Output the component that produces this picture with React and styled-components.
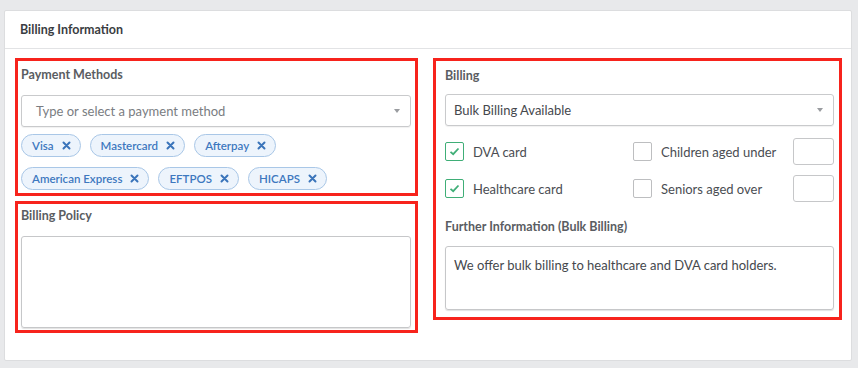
import React from "react";
import styled, { createGlobalStyle } from "styled-components";

const Global = createGlobalStyle`
  html, body { margin: 0; padding: 0; background: #e8e9eb; }
  body { font-family: Lato, "Open Sans", sans-serif; }
  * { box-sizing: border-box; }
`;

const Page = styled.div`
  padding: 10px 6px 7px 4px;
  height: 368px;
`;

const Card = styled.div`
  background: #fff;
  border: 1px solid #dcdddf;
  border-radius: 2px;
  height: 351px;
  display: flex;
  flex-direction: column;
`;

const CardHeader = styled.div`
  height: 38px;
  display: flex;
  align-items: center;
  padding-left: 15px;
  border-bottom: 1px solid #e2e3e5;
  font-size: 12.5px;
  font-weight: 700;
  color: #3a3d42;
`;

const CardBody = styled.div`
  display: grid;
  grid-template-columns: 403px 409px;
  column-gap: 15px;
  padding: 9px 0 0 10px;
  align-items: start;
`;

const Column = styled.div`
  display: flex;
  flex-direction: column;
  gap: 5px;
`;

const RedBox = styled.div`
  border: 3px solid #f7231c;
  padding: ${(p) => p.$pad || "4px 4px 4px 3px"};
  display: flex;
  flex-direction: column;
`;

const Label = styled.div`
  font-size: 12.5px;
  font-weight: 700;
  color: #5a5d62;
  height: 17px;
  line-height: 17px;
  margin: ${(p) => p.$mt || 2}px 0 ${(p) => p.$mb || 11}px;
`;

const Select = styled.div`
  height: 32px;
  border: 1px solid #c9cacc;
  border-radius: 3px;
  box-shadow: 0 1px 1px rgba(0,0,0,0.06);
  display: flex;
  align-items: center;
  justify-content: space-between;
  padding: 0 10px 0 ${(p) => p.$pl || 14}px;
  font-size: 13px;
  color: ${(p) => (p.$placeholder ? "#7a7d82" : "#45484d")};
`;

const Arrow = styled.span`
  width: 0;
  height: 0;
  border-left: 3px solid transparent;
  border-right: 3px solid transparent;
  border-top: 4px solid #9a9ca0;
`;

const Tags = styled.div`
  display: flex;
  flex-wrap: wrap;
  gap: 10px 9px;
  margin-top: 7px;
  width: 320px;
`;

const Tag = styled.span`
  height: 23px;
  border: 1px solid #a9c7e7;
  background: #edf4fc;
  border-radius: 12px;
  display: inline-flex;
  align-items: center;
  gap: 8px;
  padding: 0 9px 0 10px;
  font-size: 11.5px;
  font-weight: 600;
  color: #3d78bf;
`;

const XIcon = () => (
  <svg width="9" height="9" viewBox="0 0 9 9">
    <path d="M1.5 1.5 L7.5 7.5 M7.5 1.5 L1.5 7.5" stroke="#3a74ba" strokeWidth="2" strokeLinecap="round" />
  </svg>
);

const TextArea = styled.div`
  height: ${(p) => p.$h}px;
  border: 1px solid #c6c7c9;
  border-radius: 3px;
  box-shadow: 0 1px 1px rgba(0,0,0,0.12);
  padding: 10px 8px;
  font-size: 13px;
  color: #45484d;
`;

const CheckGrid = styled.div`
  display: grid;
  grid-template-columns: 188px 1fr 41px;
  row-gap: 10px;
  align-items: center;
  margin-top: 12px;
`;

const CheckItem = styled.label`
  display: flex;
  align-items: center;
  gap: 9px;
  font-size: 13px;
  color: #4a4d52;
`;

const Box = styled.span`
  width: 19px;
  height: 19px;
  border: 1.5px solid ${(p) => (p.$checked ? "#3fae77" : "#bdbec0")};
  border-radius: 2px;
  display: inline-flex;
  align-items: center;
  justify-content: center;
`;

const NumInput = styled.div`
  width: 41px;
  height: 27px;
  border: 1px solid #c6c7c9;
  border-radius: 3px;
`;

const Check = () => (
  <svg width="11" height="9" viewBox="0 0 11 9">
    <path d="M1.5 4.8 L4.2 7.2 L9.5 1.5" fill="none" stroke="#3fae77" strokeWidth="1.8" />
  </svg>
);

const CheckBox = ({ checked, children }) => (
  <CheckItem>
    <Box $checked={checked}>{checked && <Check />}</Box>
    {children}
  </CheckItem>
);

export default function App() {
  const methods = ["Visa", "Mastercard", "Afterpay", "American Express", "EFTPOS", "HICAPS"];
  return (
    <Page>
      <Global />
      <Card>
        <CardHeader>Billing Information</CardHeader>
        <CardBody>
          <Column>
            <RedBox $pad="3px 4px 3px 3px">
              <Label $mb={12}>Payment Methods</Label>
              <Select $placeholder>
                Type or select a payment method
                <Arrow />
              </Select>
              <Tags>
                {methods.map((m) => (
                  <Tag key={m}>
                    {m}
                    <XIcon />
                  </Tag>
                ))}
              </Tags>
            </RedBox>
            <RedBox $pad="1px 4px 2px 3px">
              <Label $mb={12}>Billing Policy</Label>
              <TextArea $h={92} />
            </RedBox>
          </Column>
          <Column>
            <RedBox $pad="4px 5px 7px 9px">
              <Label $mb={10}>Billing</Label>
              <Select $pl={8}>
                Bulk Billing Available
                <Arrow />
              </Select>
              <CheckGrid>
                <CheckBox checked>DVA card</CheckBox>
                <CheckBox>Children aged under</CheckBox>
                <NumInput />
                <CheckBox checked>Healthcare card</CheckBox>
                <CheckBox>Seniors aged over</CheckBox>
                <NumInput />
              </CheckGrid>
              <Label $mt={16} $mb={11}>Further Information (Bulk Billing)</Label>
              <TextArea $h={64}>We offer bulk billing to healthcare and DVA card holders.</TextArea>
            </RedBox>
          </Column>
        </CardBody>
      </Card>
    </Page>
  );
}
